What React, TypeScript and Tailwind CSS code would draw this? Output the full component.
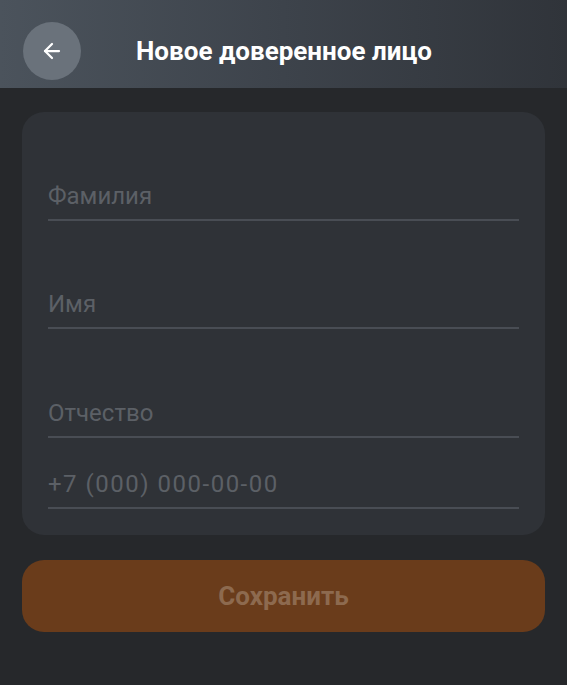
import { ArrowLeft } from "lucide-react";

const fields = [
  { label: "Фамилия", h: "h-[109px]", track: "" },
  { label: "Имя", h: "h-[108px]", track: "" },
  { label: "Отчество", h: "h-[109px]", track: "" },
  { label: "+7 (000) 000-00-00", h: "h-[71px]", track: "tracking-[1.5px]" },
];

function Field({ label, h, track }: { label: string; h: string; track: string }) {
  return (
    <div className={`flex ${h} flex-col justify-end`}>
      <div className={`pb-[11px] text-[24px] leading-none text-[#5c6066] ${track}`}>
        {label}
      </div>
      <div className="h-[2px] bg-[#494d54]" />
    </div>
  );
}

export default function App() {
  return (
    <div
      className="flex h-[685px] w-[567px] flex-col bg-[#26282b]"
      style={{ fontFamily: "Roboto, 'Noto Sans', sans-serif" }}
    >
      <header className="flex h-[88px] shrink-0 items-center bg-gradient-to-r from-[#4b535c] via-[#3d434b] to-[#30343a] pl-[23px] pt-[14px]">
        <button
          type="button"
          className="flex h-[58px] w-[58px] items-center justify-center rounded-full bg-[#6a727b]"
        >
          <ArrowLeft className="h-[24px] w-[24px] text-white" strokeWidth={2.25} />
        </button>
        <h1 className="ml-[55px] text-[26px] font-bold leading-none text-white">
          Новое доверенное лицо
        </h1>
      </header>

      <main className="flex flex-col px-[22px] pt-[24px]">
        <div className="rounded-[22px] bg-[#2f3237] px-[26px] pb-[26px]">
          {fields.map((f) => (
            <Field key={f.label} label={f.label} h={f.h} track={f.track} />
          ))}
        </div>

        <button
          type="button"
          className="mt-[25px] flex h-[72px] items-center justify-center rounded-[22px] bg-[#6a3c1b] text-[26px] font-bold text-[#8d6a4f]"
        >
          Сохранить
        </button>
      </main>
    </div>
  );
}
